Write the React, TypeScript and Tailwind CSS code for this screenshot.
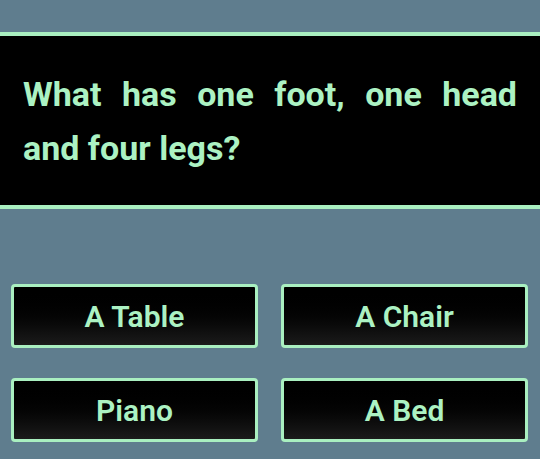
export default function App() {
  const answers = ["A Table", "A Chair", "Piano", "A Bed"];

  return (
    <div
      className="h-[459px] w-full overflow-hidden bg-[#5f7d8e] pt-[32px]"
      style={{ fontFamily: "Roboto, 'Noto Sans', sans-serif" }}
    >
      {/* Question panel */}
      <div className="h-[177px] border-y-4 border-[#a9efc0] bg-black px-[23px] pt-[31px]">
        <p className="text-justify text-[34px] font-bold leading-[54px] text-[#acf2c3]">
          What has one foot, one head and four legs?
        </p>
      </div>

      {/* Answers */}
      <div className="mt-[75px] grid grid-cols-2 gap-x-[23px] gap-y-[30px] pl-[11px] pr-[12px]">
        {answers.map((a) => (
          <button
            key={a}
            className="flex h-[64px] items-center justify-center rounded-[4px] border-[3px] border-[#a9efc0] bg-gradient-to-b from-black to-[#1b1b1b] text-[30px] font-semibold text-[#acf2c3]"
          >
            {a}
          </button>
        ))}
      </div>
    </div>
  );
}
